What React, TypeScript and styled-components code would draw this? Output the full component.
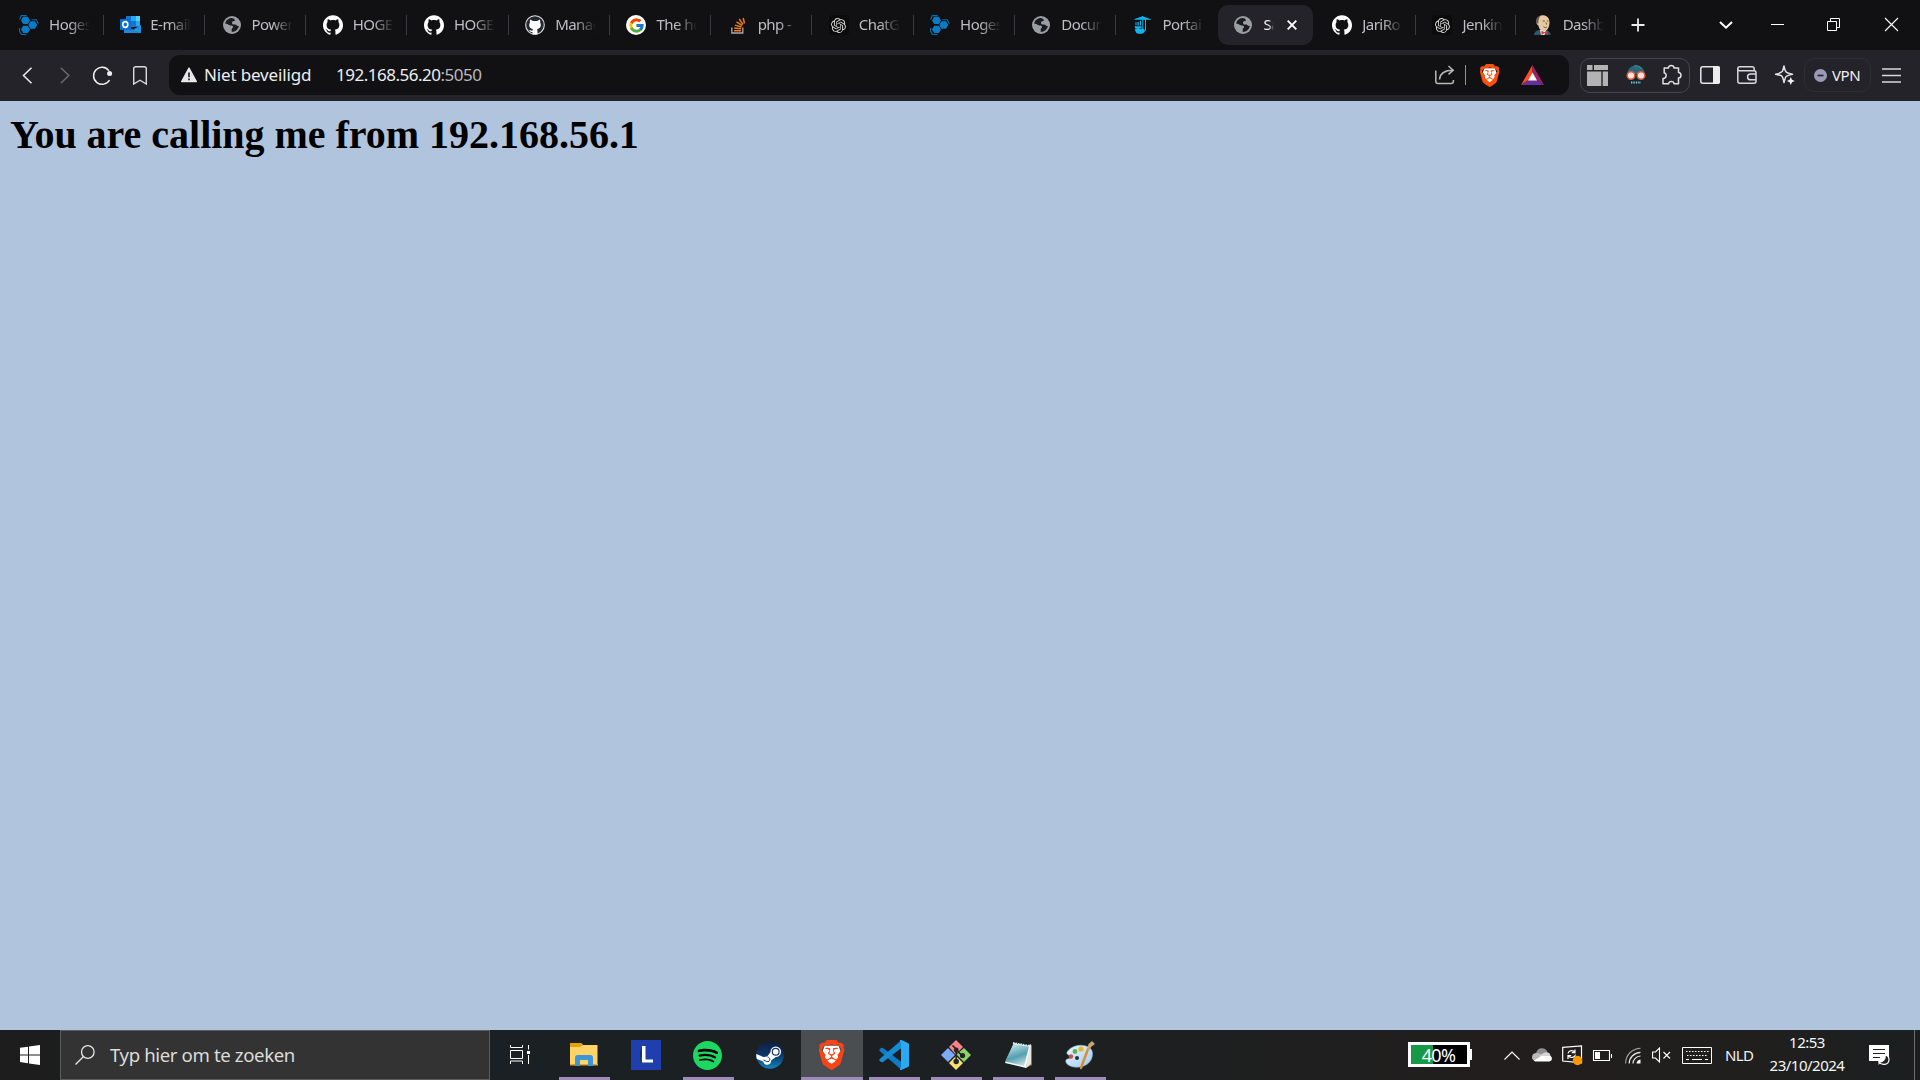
import React from 'react';
import styled, { createGlobalStyle, css } from 'styled-components';
import { SiGithub, SiOpenai, SiBrave, SiSpotify } from 'react-icons/si';
import { FcGoogle } from 'react-icons/fc';

const GlobalStyle = createGlobalStyle`
  * { box-sizing: border-box; }
  html, body { margin: 0; padding: 0; overflow: hidden; background: #b0c4de; }
`;

const UI_FONT = `"Noto Sans", "Open Sans", sans-serif`;

const Screen = styled.div`
  width: 1920px;
  height: 1080px;
  display: flex;
  flex-direction: column;
  font-family: ${UI_FONT};
  color: #fff;
  overflow: hidden;
`;

/* ---------- tab strip ---------- */

const TabStrip = styled.div`
  display: flex;
  align-items: center;
  height: 50px;
  flex: none;
  padding-left: 2.6px;
  background: #111113;
`;

const Tab = styled.div<{ $w: number; $divider: boolean }>`
  display: flex;
  align-items: center;
  flex: none;
  width: ${p => p.$w}px;
  height: 20px;
  padding-left: 16.5px;
  border-right: 1px solid ${p => (p.$divider ? '#3b3b3f' : 'transparent')};
`;

const ActiveTab = styled.div`
  display: flex;
  align-items: center;
  flex: none;
  width: 95px;
  height: 40px;
  margin: 0 2.400px 0 1.2px;
  padding-left: 15px;
  border-radius: 10px;
  background: #242329;
`;

const Favicon = styled.span`
  display: flex;
  align-items: center;
  justify-content: center;
  flex: none;
  width: 20px;
  height: 20px;
  svg { display: block; flex: none; }
`;

const GptTile = styled(Favicon)`
  background: #0b0b0b;
  border-radius: 3px;
`;

const Disc = styled(Favicon)<{ $bg: string }>`
  border-radius: 50%;
  background: ${p => p.$bg};
`;

const TabLabel = styled.span<{ $w?: number; $bright?: boolean }>`
  width: ${p => p.$w ?? 41}px;
  margin: -2px 0 0 10px;
  overflow: hidden;
  white-space: nowrap;
  font-size: 15px;
  line-height: 20px;
  letter-spacing: -0.55px;
  color: ${p => (p.$bright ? '#f4f4f6' : '#bfbfc3')};
  mask-image: linear-gradient(to right, #000 50%, transparent 100%);
`;

const CloseTab = styled.span`
  display: flex;
  margin-left: 13px;
`;

const WindowControls = styled.div`
  display: flex;
  align-items: center;
  margin-left: auto;
  padding: 0 22px 1px 0;
`;

const Glyph = styled.span<{ $ml?: number }>`
  display: flex;
  flex: none;
  margin-left: ${p => p.$ml ?? 0}px;
  svg { display: block; overflow: visible; }
`;

/* ---------- toolbar ---------- */

const Toolbar = styled.div`
  display: flex;
  align-items: center;
  flex: none;
  height: 51px;
  padding: 0 18px 1px 22px;
  background: #242329;
`;

const AddressBar = styled.div`
  display: flex;
  align-items: center;
  flex: none;
  width: 1400px;
  height: 40px;
  margin-left: 22px;
  padding: 0 25px 0 12px;
  border-radius: 11px;
  background: #111113;
`;

const Security = styled.span`
  width: 108px;
  margin: -1px 0 0 7px;
  white-space: nowrap;
  font-size: 17px;
  line-height: 24px;
  letter-spacing: -0.15px;
  color: #ededf0;
`;

const Address = styled.span`
  margin: -1px 0 0 24px;
  white-space: nowrap;
  font-size: 17px;
  line-height: 24px;
  letter-spacing: -0.5px;
  color: #ededf0;
`;

const Port = styled.span`
  color: #b9b9be;
`;

const BarEnd = styled.div`
  display: flex;
  align-items: center;
  margin-left: auto;
`;

const BarDivider = styled.span`
  width: 1px;
  height: 20px;
  margin: 0 14px 0 10px;
  background: #929297;
`;

const ExtensionGroup = styled.div`
  display: flex;
  align-items: center;
  flex: none;
  width: 110px;
  height: 35px;
  margin-left: 11px;
  padding-left: 6px;
  border: 1px solid #45454b;
  border-radius: 10px;
`;

const VpnButton = styled.div`
  display: flex;
  align-items: center;
  flex: none;
  width: 67px;
  height: 34px;
  margin-left: 9px;
  padding-left: 9px;
  border: 1px solid #2e2e33;
  border-radius: 10px;
  font-size: 15px;
  letter-spacing: -0.4px;
  color: #f0f0f2;
`;

const VpnText = styled.span`
  margin-left: 5px;
`;

/* ---------- page ---------- */

const Page = styled.main`
  flex: 1;
  padding: 11px 10px;
  background: #b0c4de;
`;

const Heading = styled.h1`
  margin: 0;
  font: bold 40px/46px "Liberation Serif", "Times New Roman", serif;
  letter-spacing: -0.02px;
  color: #000;
  white-space: nowrap;
`;

/* ---------- taskbar ---------- */

const Taskbar = styled.footer`
  display: flex;
  flex: none;
  height: 50px;
  background: linear-gradient(to right, #1d1d1d 0, #1b2024 500px, #1c2022 1000px, #211e1d 1500px, #201f1e 1750px, #1b1f20 1920px);
`;

const StartButton = styled.div`
  display: flex;
  align-items: center;
  justify-content: center;
  width: 60px;
  flex: none;
`;

const SearchBox = styled.div`
  display: flex;
  align-items: center;
  flex: none;
  width: 430px;
  padding-left: 14px;
  border: 1px solid #5c5c5c;
  background: #333;
`;

const SearchText = styled.span`
  margin-left: 15px;
  font-size: 18.6px;
  letter-spacing: -0.38px;
  line-height: 26px;
  color: #dcdcdc;
  white-space: nowrap;
`;

const TaskView = styled.div`
  display: flex;
  align-items: center;
  justify-content: center;
  flex: none;
  width: 63px;
  padding: 0 3px 1px 0;
`;

const TaskSlot = styled.div<{ $running?: boolean; $active?: boolean }>`
  display: flex;
  flex: none;
  align-items: center;
  justify-content: center;
  width: 62px;
  ${p => p.$running && css`
    background: linear-gradient(#9f8bb9, #9f8bb9) 50% 100% / ${p.$active ? '62px' : '51px'} 3px no-repeat;
  `}
  ${p => p.$active && css`background-color: #4b4e51;`}
  svg { display: block; }
`;

const LetterIcon = styled.span`
  display: flex;
  align-items: center;
  justify-content: center;
  width: 30px;
  height: 30px;
  background: #203fae;
`;

const SpotifyDisc = styled.span`
  display: flex;
  margin-right: 1px;
  border-radius: 50%;
  background: radial-gradient(circle, #000 60%, transparent 62%);
`;

const Tray = styled.div`
  display: flex;
  align-items: center;
  margin-left: auto;
  height: 50px;
`;

const BatteryMeter = styled.div`
  display: flex;
  align-items: center;
  flex: none;
  margin-top: -1px;
`;

const BatteryBody = styled.div<{ $level: number }>`
  display: flex;
  align-items: center;
  justify-content: center;
  width: 62px;
  height: 25px;
  border: 3px solid #fff;
  padding-right: 1px;
  background: linear-gradient(to right, #159947 ${p => p.$level}%, #000 ${p => p.$level}%);
  font-size: 18px;
  line-height: 18px;
  letter-spacing: -0.7px;
  color: #fff;
`;

const BatteryNub = styled.span`
  width: 2px;
  height: 11px;
  background: #fff;
`;

const Language = styled.span`
  width: 30px;
  margin-left: 13px;
  font-size: 15px;
  letter-spacing: -0.6px;
  color: #f0f0f0;
`;

const Clock = styled.div`
  display: flex;
  flex-direction: column;
  align-items: center;
  width: 80px;
  margin: -2px 0 0 12px;
  font-size: 15px;
  line-height: 23px;
  letter-spacing: -0.5px;
  color: #f6f6f6;
  white-space: nowrap;
`;

const ShowDesktop = styled.span`
  align-self: stretch;
  width: 6px;
  margin-left: 24px;
  border-left: 1px solid #6d6d6d;
`;

/* ---------- drawings ---------- */

const Hogent = () => (
  <svg width="20" height="20" viewBox="0 0 20 20">
    <g fill="#0a7cc6">
      <path d="M4.200 1.800h4.600l2.200 3.600L8.800 9H4.200L2 5.400Z" />
      <path d="M11.500 6.300h4.500l2.200 3.700-2.200 3.700h-4.500L9.300 10Z" />
      <path d="M4.200 10.800h4.600l2.200 3.600L8.800 18H4.200L2 14.400Z" />
    </g>
    <path d="M.6 4.500 2.300.6h5.500M12.500 4.700h4.800l2 4M.6 13v3.500l2 3h5" fill="none" stroke="#0c6da9" strokeWidth="1.100" />
  </svg>
);

const Outlook = () => (
  <svg width="21" height="20" viewBox="0 0 21 20">
    <path d="M6 1h14v11H6z" fill="#1476c6" />
    <path d="M11 1h5v5h-5z" fill="#28a8ea" /><path d="M16 1h4v5h-4z" fill="#50d0f5" />
    <path d="M11 6h5v5h-5z" fill="#0f78d4" /><path d="M16 6h4v5h-4z" fill="#28a8ea" />
    <path d="m4 10 8.500 5 8.500-5v8H4z" fill="#1b96e0" />
    <path d="m4 11 17 7H4z" fill="#1f87d6" />
    <rect y="4" width="11" height="11" rx=".7" fill="#0a6fd0" />
    <ellipse cx="5.300" cy="9.500" rx="2.500" ry="2.900" fill="none" stroke="#fff" strokeWidth="1.600" />
  </svg>
);

const Globe = () => (
  <svg width="18" height="18" viewBox="0 0 18 18">
    <circle cx="9" cy="9" r="9" fill="#9a9ea4" />
    <path d="M8.200 2.100c-3 .3-5.500 2.700-6 5.400 1.500.2 2.600.5 3.300 1.200.8.800 1.700.7 2.800.7 1.400 0 1.900.8 1.700 1.900-.2.900-1.300 1-1.300 2.100v2.600c3.700-.2 6.600-2.700 7.200-6-1.300.2-1.900 0-2.300-.7-.4-.8-1.300-.9-2.400-.8-1.500.100-2.200-.7-2.200-1.600 0-1.200.8-1.700 2-1.800.9-.1 1-.8.7-1.400-.4-.7-2-1.700-3.500-1.600Z" fill="#1b1b1e" />
  </svg>
);

const StackOverflow = () => (
  <svg width="20" height="20" viewBox="0 0 20 20" fill="none">
    <path d="M3.800 12.500V18h11v-5.500" stroke="#a8acb0" strokeWidth="1.300" />
    <path d="M6 15.800h7M6.200 13l6.900.7M6.900 10.100l6.600 1.900M8.500 6.800l5.700 3.700M11.200 4l3.800 5.400M15.200 3l1.300 5.500" stroke="#e87922" strokeWidth="1.500" />
  </svg>
);

const Portainer = () => (
  <svg width="20" height="20" viewBox="0 0 20 20" fill="#10b4ee">
    <path d="M1.500 3.900 9.500 1.200 18 4.200v.6H1.500zM9.300 1h1v13h-1zM12 4.500h1v11h-1z" />
    <path d="M2.500 7h1v3.500h-1zM4.500 7h1.300v3.500H4.500zM7 5.800h1v4.700H7zM1.800 11.200h6.700V13H1.800z" />
    <path d="M2 13.700c2-1 4.500-.8 6 .2 1.500-.8 3.800 0 4 2-.8 2.400-3 3.100-5.500 2.900C3.500 19 2 16.500 2 13.700Z" />
  </svg>
);

const Jenkins = () => (
  <svg width="20" height="20" viewBox="0 0 20 20">
    <path d="M1 20c.2-3 2.500-4.700 5-5h7c2.500.5 4.500 2.500 4.800 5z" fill="#31566b" />
    <path d="M7 15h6l-1.500 5H8z" fill="#e9edf0" />
    <path d="M3.500 5.500C4.500 2 7 0 10.400.2c4 .3 6.200 3.300 6.100 7.300-.1 4.500-2 8.500-5.500 8.500-3.400 0-5-2.200-5.500-5.500C3.800 10 2.900 7 3.500 5.500Z" fill="#e8c8a3" />
    <path d="M3.200 8.500c-.8-4.300.8-7.200 4.500-8.100C6 2.500 5.300 4.600 5.400 8.500z" fill="#665f5c" />
    <path d="M9.800 6h2M13.900 6h1.500M10.500 11.800c1.100.9 2.500.9 3.600 0M13 7.500l.6 2" fill="none" stroke="#57453c" strokeWidth=".9" />
    <path d="m8.500 15.800 3 1.500 3.200-1.500v4L11.500 18l-3 2z" fill="#e0352d" />
  </svg>
);

const BraveLion = ({ size, tone }: { size: number; tone: string }) => (
  <svg width={size * 0.84} height={size} viewBox="2.250 0 19.500 24">
    <path d="M6.500 4.500h11l1.500 4-2.500 8-4.500 3.300L7.500 16.500 5 8.500Z" fill="#fff" />
    <SiBrave size={24} color={tone} />
  </svg>
);

const SpyFace = () => (
  <svg width="20" height="20" viewBox="0 0 20 20">
    <path d="M1.500 9C1.500 3.500 5 .5 10 .5s8.500 3 8.500 8.500z" fill="#2c6778" />
    <path d="M8 1c3-.8 6 .5 7.500 3" fill="none" stroke="#4593a4" />
    <path d="M2.500 13h15L16 19.500H4z" fill="#12262f" />
    <circle cx="5" cy="10.500" r="3.800" fill="#f8e4dc" stroke="#dd5a40" strokeWidth="1.500" />
    <circle cx="15" cy="10.500" r="3.800" fill="#f8e4dc" stroke="#dd5a40" strokeWidth="1.500" />
    <path d="M5 17.600h10" stroke="#8fc5d0" strokeWidth="2" strokeDasharray="1.400 1" />
  </svg>
);

const WindowsLogo = () => (
  <svg width="20" height="20" viewBox="0 0 20 20" fill="#fff">
    <path d="M0 2.800 8 1.700v7.700H0zM9 1.500 20 0v9.400H9zM0 10.400h8v7.800l-8-1.100zM9 10.400h11V20L9 18.400z" />
  </svg>
);

const Explorer = () => (
  <svg width="28" height="24" viewBox="0 0 28 24">
    <path d="M0 0h11.500l2 2.500v3H0z" fill="#e3a20b" />
    <path d="M0 4h10l3-2h14.500v20H0z" fill="#fed467" />
    <path d="M0 21h28v1.500H0z" fill="#dca62d" />
    <path d="M5 23V14.500a2.500 2.500 0 0 1 2.500-2.500h13a2.500 2.500 0 0 1 2.500 2.500V23h-5v-6h-8v6z" fill="#3e96d8" />
  </svg>
);

const LetterL = () => (
  <svg width="30" height="30" viewBox="0 0 30 30">
    <path d="M11 7v15H9V11zM11 22l10 1H9z" fill="#15315d" />
    <path d="M8 23l3-8v7h10v1z" fill="#17485d" />
    <path d="M11 6h3.500v13.500H22V22.500H11z" fill="#fff" />
  </svg>
);

const VsCode = () => (
  <svg width="30" height="30" viewBox="0 0 30 30">
    <path d="M.5 9.500 2 8q1-.6 2 0L22.500 22v8L.7 11Q0 10.200.5 9.500Z" fill="#0d7bc5" />
    <path d="M.5 20.500 2 22q1 .6 2 0L22.500 8V0L.7 19Q0 19.800.5 20.500Z" fill="#168bd4" />
    <path d="M22.300 0 29 3q1 .5 1 1.500v21q0 1-1 1.500l-6.700 3q-1 .2-1.600-.7L22 27V3l-1.300-2.300Q21.300-.2 22.300 0Z" fill="#2aaaf2" />
  </svg>
);

const GitBash = () => (
  <svg width="30" height="30" viewBox="0 0 30 30">
    <path d="m15 0 7 7-7.500 7.500L8 7z" fill="#fa8288" />
    <path d="m23 8 7 7-7 7-7.500-7.500z" fill="#8cd465" />
    <path d="m7 8 7 7-7 7-7-7z" fill="#7cabf8" />
    <path d="m15 16 7 7-7 7-7-7z" fill="#fadf73" />
    <path d="M11.500 5.500 15.200 9v12M15.200 10l6.300 6" fill="none" stroke="#222527" strokeWidth="1.700" />
    <g fill="#222527"><circle cx="15.200" cy="10" r="2.400" /><circle cx="15.200" cy="21.500" r="2.700" /><circle cx="21.500" cy="15.500" r="2.600" /></g>
  </svg>
);

const Notepad = () => (
  <svg width="29" height="28" viewBox="0 0 29 28">
    <defs>
      <linearGradient id="note" x1=".3" y1="0" x2=".7" y2="1">
        <stop offset="0" stopColor="#c2e8eb" /><stop offset=".55" stopColor="#559faf" /><stop offset="1" stopColor="#c9e1e5" />
      </linearGradient>
    </defs>
    <path d="m24 5 4-1v20l-6 3z" fill="#8f733f" />
    <path d="m25 4 2-1v20l-5 4z" fill="#e9e7dd" />
    <path d="M10 2 26 5l-4 22L1 22z" fill="#f5fafa" />
    <path d="M9.500 3 25 5.500 20 25 1 20.500z" fill="url(#note)" />
    <path d="m9 2 17 3" stroke="#dce6e8" strokeWidth="2" strokeDasharray="1.500 1" />
  </svg>
);

const Paint = () => (
  <svg width="30" height="29" viewBox="0 0 30 29">
    <defs>
      <linearGradient id="pal" x1="0" x2="1" y1="0" y2="1"><stop offset="0" stopColor="#f0f8fc" /><stop offset="1" stopColor="#9ccbea" /></linearGradient>
    </defs>
    <path d="M2 11C6 5 14 3 21 5c7 2 8 8 5 14-3 5-9 8-17 7-7-1-9-5-8-7s6-1 5-3-5-2-4-5Z" fill="url(#pal)" stroke="#7aaed2" strokeWidth=".6" />
    <circle cx="12" cy="17" r="2" fill="#22343f" />
    <circle cx="6" cy="15.500" r="2.200" fill="#d74a42" />
    <circle cx="10" cy="10.500" r="2.400" fill="#54b657" />
    <circle cx="16" cy="8" r="2.600" fill="#eeb429" />
    <path d="M23 8 16 27" stroke="#d88a3a" strokeWidth="2.400" strokeLinecap="round" />
    <path d="m22 9 1.500-6L27 0l3 3-4 3-2 4z" fill="#caa274" />
  </svg>
);

const Cloud = () => (
  <svg width="20" height="14" viewBox="0 0 20 14">
    <path d="M4 6C4.500 2 7 .3 10 .3s5 1.700 5.500 4.200L10 9z" fill="#8e8e8e" />
    <path d="M4 13C1.500 13 0 11.300 0 9.200 0 6.500 2 5 4.500 5S8 5.500 9 6.500L14 10v3z" fill="#b9b9b9" />
    <path d="m7 8 4.500-3c4-2 7 .5 7 2.700L10 13z" fill="#d5d5d5" />
    <path d="M2 12.500 9.500 8 18.500 8c2.500 1.500 1.500 5.500-1.500 5.500H4c-1 0-1.500-.4-2-1Z" fill="#fff" />
  </svg>
);

const Update = () => (
  <svg width="20" height="20" viewBox="0 0 20 20" fill="none">
    <path d="m.7 2.300 18.800-1.500v17L.7 16z" stroke="#fff" strokeWidth="1.200" />
    <path d="M6 8.500c.5-3 5-4.300 7-1M13 4.500v3.200h-3.200M13.500 9.500c-.5 3-5 4.300-7.500 1.200M6 14v-3.400h3.200" stroke="#fff" strokeWidth="1.200" />
    <circle cx="15.500" cy="15.500" r="4.700" fill="#ff9800" />
  </svg>
);

const Keyboard = () => (
  <svg width="30" height="17" viewBox="0 0 30 17" fill="none" stroke="#fff">
    <path d="M.5.5h29v16H.5z" />
    <path d="M4 4.500h22.500M5 8.500h21" strokeDasharray="1.500 1.500" />
    <path d="M4 12.500h3M10 12.500h10M23 12.500h3" />
  </svg>
);

const Notification = () => (
  <svg width="21" height="21" viewBox="0 0 21 21">
    <path d="M0 0h20v16h-7l-3.500 4v-4H0z" fill="#fff" />
    <path d="M4 4.500h12M4 8.500h12M4 12.500h7" stroke="#222" />
    <path d="M16 10c1 4-2 7-6 7 2 3.500 9.500 3.500 10-2 .2-2.500-1.500-4.500-4-5Z" fill="#222" stroke="#fff" strokeWidth="1.200" />
  </svg>
);

/* ---------- data ---------- */

const githubMark = <Favicon><SiGithub size={20} color="#fff" /></Favicon>;
const gptMark = <GptTile><SiOpenai size={15} color="#d2d2d2" /></GptTile>;

type TabInfo = { label: string; icon: React.ReactNode; divider?: boolean };

const leftTabs: TabInfo[] = [
  { label: 'Hoges', icon: <Favicon><Hogent /></Favicon> },
  { label: 'E-mail', icon: <Favicon><Outlook /></Favicon> },
  { label: 'Power', icon: <Favicon><Globe /></Favicon> },
  { label: 'HOGE', icon: githubMark },
  { label: 'HOGE', icon: githubMark },
  { label: 'Manag', icon: <Disc $bg="#24292f"><svg width="20" height="20" viewBox="0 0 20 20"><circle cx="10" cy="10" r="9.300" fill="none" stroke="#d8dadd" strokeWidth="1.100" /><path d="M5 4.500 8 6h4l3-1.500.3 3.500c1.500 3-.3 5.500-3 6l.3 5.500H7.300L7.500 17c-2 .2-2.500-.7-3.500-2 1.500 0 2 1 3.500.5l.4-1.500c-3-.5-4.600-3-3.100-6z" fill="#fff" /></svg></Disc> },
  { label: 'The ho', icon: <Disc $bg="#fff"><FcGoogle size={17} /></Disc> },
  { label: 'php -', icon: <Favicon><StackOverflow /></Favicon> },
  { label: 'ChatG', icon: gptMark },
  { label: 'Hoges', icon: <Favicon><Hogent /></Favicon> },
  { label: 'Docum', icon: <Favicon><Globe /></Favicon> },
  { label: 'Portai', icon: <Favicon><Portainer /></Favicon>, divider: false },
];

const rightTabs: TabInfo[] = [
  { label: 'JariRo', icon: githubMark },
  { label: 'Jenkin', icon: gptMark },
  { label: 'Dashb', icon: <Favicon><Jenkins /></Favicon> },
];

const renderTab = (width: number) => (tab: TabInfo, i: number) => (
  <Tab key={i} $w={width} $divider={tab.divider !== false}>
    {tab.icon}
    <TabLabel>{tab.label}</TabLabel>
  </Tab>
);

export default function App() {
  return (
    <Screen>
      <GlobalStyle />
      <TabStrip>
        {leftTabs.map(renderTab(101.22))}
        <ActiveTab>
          <Favicon><Globe /></Favicon>
          <TabLabel $w={11} $bright>Sa</TabLabel>
          <CloseTab>
            <svg width="10" height="10" viewBox="0 0 10 10"><path d="m.7.7 8.600 8.600m0-8.600L.7 9.300" stroke="#fff" strokeWidth="1.900" /></svg>
          </CloseTab>
        </ActiveTab>
        {rightTabs.map(renderTab(100.2))}
        <Glyph $ml={15}><svg width="14" height="14" viewBox="0 0 14 14"><path d="M7 .5v13M.5 7h13" stroke="#ececee" strokeWidth="1.800" /></svg></Glyph>
        <WindowControls>
          <Glyph><svg width="14" height="8" viewBox="0 0 14 8"><path d="m1 1 6 5.700L13 1" fill="none" stroke="#fff" strokeWidth="2" /></svg></Glyph>
          <Glyph $ml={38}><svg width="13" height="13" viewBox="0 0 13 13"><path d="M0 6.500h13" stroke="#fff" /></svg></Glyph>
          <Glyph $ml={43}><svg width="13" height="13" viewBox="0 0 13 13"><path d="M.5 3.500h9v9h-9zM3.500 3V.5h9v9H10" fill="none" stroke="#fff" /></svg></Glyph>
          <Glyph $ml={45}><svg width="13" height="13" viewBox="0 0 13 13"><path d="m0 0 13 13M13 0 0 13" stroke="#fff" strokeWidth="1.100" /></svg></Glyph>
        </WindowControls>
      </TabStrip>

      <Toolbar>
        <Glyph><svg width="11" height="17" viewBox="0 0 11 17"><path d="M9.500.7 1.500 8.500l8 7.800" fill="none" stroke="#efeff1" strokeWidth="1.500" /></svg></Glyph>
        <Glyph $ml={27}><svg width="10" height="17" viewBox="0 0 10 17"><path d="m.8.700 8 7.800-8 7.800" fill="none" stroke="#6c6b72" strokeWidth="1.400" /></svg></Glyph>
        <Glyph $ml={23}><svg width="19" height="19" viewBox="0 0 19 19"><path d="M15.900 4.700A8.500 8.500 0 1 0 16.500 14" fill="none" stroke="#efeff1" strokeWidth="1.500" /><circle cx="16.600" cy="7.500" r="2.500" fill="#efeff1" /></svg></Glyph>
        <Glyph $ml={21}><svg width="14" height="19" viewBox="0 0 14 19"><path d="M.7 18V2.700a2 2 0 0 1 2-2h8.600a2 2 0 0 1 2 2V18L7 14.200z" fill="none" stroke="#dcdce0" strokeWidth="1.400" /></svg></Glyph>
        <AddressBar>
          <Glyph><svg width="16" height="16" viewBox="0 0 16 16"><path d="M8 1.200 15.300 14.500H.7z" fill="#e8e8eb" stroke="#e8e8eb" strokeWidth="1.400" strokeLinejoin="round" /><path d="M8 5.500v4.700M8 11.500v1.800" stroke="#242329" strokeWidth="1.700" /></svg></Glyph>
          <Security>Niet beveiligd</Security>
          <Address>192.168.56.20<Port>:5050</Port></Address>
          <BarEnd>
            <Glyph><svg width="20" height="20" viewBox="0 0 20 20" fill="none" stroke="#b9b9bd" strokeWidth="1.500"><path d="M.8 5.500v10.800a2.300 2.300 0 0 0 2.300 2.300h13a2.300 2.300 0 0 0 2.300-2.300V15M4.500 14.500c.5-6 4-9.300 13.500-9.300M13.500 1l4.700 4.200-4.700 4.200" /></svg></Glyph>
            <BarDivider />
            <Glyph><BraveLion size={23} tone="#fb4f0c" /></Glyph>
            <Glyph $ml={22}>
              <svg width="23" height="20" viewBox="0 0 23 20">
                <path d="M11.500 0 0 20l7.500-5 4-7z" fill="#ff4e20" />
                <path d="M11.500 0 23 20l-7.500-5-4-7z" fill="#9e1f63" />
                <path d="M0 20h23l-7.500-5h-8z" fill="#66319b" />
                <path d="m11.500 7.500 4.500 8H7z" fill="#fff" />
              </svg>
            </Glyph>
          </BarEnd>
        </AddressBar>
        <ExtensionGroup>
          <Glyph><svg width="21" height="21" viewBox="0 0 21 21" fill="#b3b3b3"><path d="M0 0h5.500v5H0zM7 0h14v5H7zM0 6.500h14.300V21H0zM15.700 6.500H21V21h-5.300z" /></svg></Glyph>
          <Glyph $ml={18}><SpyFace /></Glyph>
          <Glyph $ml={16}><svg width="20" height="20" viewBox="0 0 20 20" fill="none" stroke="#e1e1e4" strokeWidth="1.500" strokeLinejoin="round"><path d="M2.200 3h4.300C6.300-.3 12.300-.3 12 3h4.500v4.500c3.300 0 3.300 5.500 0 5.500v5.800H12c.2-3.200-5.500-3.200-5.300 0H1V13.500c4 .2 4-5.700 1.200-5.500z" /></svg></Glyph>
        </ExtensionGroup>
        <Glyph $ml={10}><svg width="20" height="18" viewBox="0 0 20 18"><rect x=".8" y=".8" width="18.400" height="16.400" rx="2" fill="none" stroke="#e6e6e9" strokeWidth="1.500" /><path d="M13 0h5a2 2 0 0 1 2 2v14a2 2 0 0 1-2 2h-5z" fill="#ededf0" /></svg></Glyph>
        <Glyph $ml={17}><svg width="20" height="18" viewBox="0 0 20 18" fill="none" stroke="#d9d9dd" strokeWidth="1.500"><path d="M17.200 5V2.700A2 2 0 0 0 15.200.8H2.800a2 2 0 0 0 0 4H17a2 2 0 0 1 2 2v8.400a2 2 0 0 1-2 2H2.800a2 2 0 0 1-2-2V2.800M19 8h-5.500a2.900 2.900 0 0 0 0 5.800H19" /></svg></Glyph>
        <Glyph $ml={18}><svg width="20" height="20" viewBox="0 0 20 20"><path d="M9 .9c.7 4 1.500 6 3 6.700 1 .6 3 1 5.500 1.600-4 .8-6 1.400-6.800 2.800-.6 1-1 3-1.700 5.600-.7-4-1.300-6-2.700-7C5.300 10 3.300 9.700.6 9.200c4-.8 6-1.500 6.900-3C8 5.300 8.400 3.500 9 .9Z" fill="none" stroke="#e2e2e6" strokeWidth="1.500" strokeLinejoin="round" /><path d="m15.800 12 1.200 2.800 2.800 1.200-2.800 1.200-1.200 2.800-1.200-2.800-2.800-1.200 2.800-1.200z" fill="#f0f0f2" /></svg></Glyph>
        <VpnButton>
          <Glyph><svg width="13" height="13" viewBox="0 0 13 13"><circle cx="6.500" cy="6.500" r="6.500" fill="#9a9ab8" /><path d="M3.500 6.500h6" stroke="#242329" strokeWidth="1.700" /></svg></Glyph>
          <VpnText>VPN</VpnText>
        </VpnButton>
        <Glyph $ml={11}><svg width="19" height="15" viewBox="0 0 19 15"><path d="M0 1h19M0 7.500h19M0 14h19" stroke="#d8d8dc" strokeWidth="1.600" /></svg></Glyph>
      </Toolbar>

      <Page>
        <Heading>You are calling me from 192.168.56.1</Heading>
      </Page>

      <Taskbar>
        <StartButton><WindowsLogo /></StartButton>
        <SearchBox>
          <Glyph><svg width="20" height="20" viewBox="0 0 20 20" fill="none" stroke="#e8e8e8" strokeWidth="1.300"><circle cx="12.800" cy="7" r="6.300" /><path d="M8.500 11.500.5 19.500" /></svg></Glyph>
          <SearchText>Typ hier om te zoeken</SearchText>
        </SearchBox>
        <TaskView>
          <svg width="20" height="19" viewBox="0 0 20 19" fill="none" stroke="#fff"><path d="M.5 0v2.500h12V0M.5 5.500h12v8H.5zM.5 19v-3h12v3M18.500 0v4.500M18.500 10v9" /><path d="M17 6h3v3h-3z" fill="#fff" stroke="none" /></svg>
        </TaskView>
        <TaskSlot $running><Explorer /></TaskSlot>
        <TaskSlot><LetterIcon><LetterL /></LetterIcon></TaskSlot>
        <TaskSlot $running><SpotifyDisc><SiSpotify size={29} color="#1ed760" /></SpotifyDisc></TaskSlot>
        <TaskSlot>
          <svg width="28" height="28" viewBox="0 0 28 28">
            <defs><linearGradient id="steam" x1="0" x2="0" y1="0" y2="1"><stop offset="0" stopColor="#111d3e" /><stop offset=".5" stopColor="#0d366a" /><stop offset="1" stopColor="#1384b8" /></linearGradient></defs>
            <circle cx="14" cy="14" r="13.800" fill="url(#steam)" />
            <path d="M.3 13 8 16.200q1.600-1 3.300-.6l3.200-4.700a5.300 5.300 0 1 1 5.300 5.200l-4.700 3.500a4 4 0 0 1-7.900 1L.8 18Q0 15.500.3 13Z" fill="#fff" />
            <circle cx="19.700" cy="10.800" r="3.400" fill="#fff" stroke="#163764" strokeWidth="1.200" />
            <path d="m7.500 19 2.400 1a2.300 2.300 0 1 0 1.700-3.900" fill="none" stroke="#163764" strokeWidth="1" />
          </svg>
        </TaskSlot>
        <TaskSlot $running $active><BraveLion size={30} tone="#fc4316" /></TaskSlot>
        <TaskSlot $running><VsCode /></TaskSlot>
        <TaskSlot $running><GitBash /></TaskSlot>
        <TaskSlot $running><Notepad /></TaskSlot>
        <TaskSlot $running><Paint /></TaskSlot>
        <Tray>
          <BatteryMeter>
            <BatteryBody $level={40}>40%</BatteryBody>
            <BatteryNub />
          </BatteryMeter>
          <Glyph $ml={32}><svg width="16" height="9" viewBox="0 0 16 9"><path d="m.5 8.500 7.500-7.500 7.500 7.500" fill="none" stroke="#fff" strokeWidth="1.200" /></svg></Glyph>
          <Glyph $ml={12}><Cloud /></Glyph>
          <Glyph $ml={10}><Update /></Glyph>
          <Glyph $ml={11}><svg width="19" height="11" viewBox="0 0 19 11"><path d="M.5.5h16v10H.5zM18.500 4v4" fill="none" stroke="#fff" strokeWidth="1.100" /><path d="M2 2h5v7H2z" fill="#fff" /></svg></Glyph>
          <Glyph $ml={13}><svg width="16" height="17" viewBox="0 0 16 17" fill="none" stroke="#e8e8e8" strokeWidth="1.200"><path d="M.6 16.500C.6 8 7 1.500 15.500 1.300" opacity=".6" /><path d="M4.200 16.500c0-6 5-11 11.300-11.200M8 16.500c0-4 3.300-7.300 7.500-7.500" /><path d="M11.500 16.500c.2-2 1.500-3.700 4-4v4z" fill="#fff" stroke="none" /></svg></Glyph>
          <Glyph $ml={11}><svg width="19" height="16" viewBox="0 0 19 16" fill="none" stroke="#fff" strokeWidth="1.100"><path d="M.6 5h2.900L7.500 1v14l-4-4H.6zM11.500 5l6.500 6.500M18 5l-6.500 6.500" /></svg></Glyph>
          <Glyph $ml={11}><Keyboard /></Glyph>
          <Language>NLD</Language>
          <Clock>
            <span>12:53</span>
            <span>23/10/2024</span>
          </Clock>
          <Glyph $ml={22}><Notification /></Glyph>
          <ShowDesktop />
        </Tray>
      </Taskbar>
    </Screen>
  );
}
